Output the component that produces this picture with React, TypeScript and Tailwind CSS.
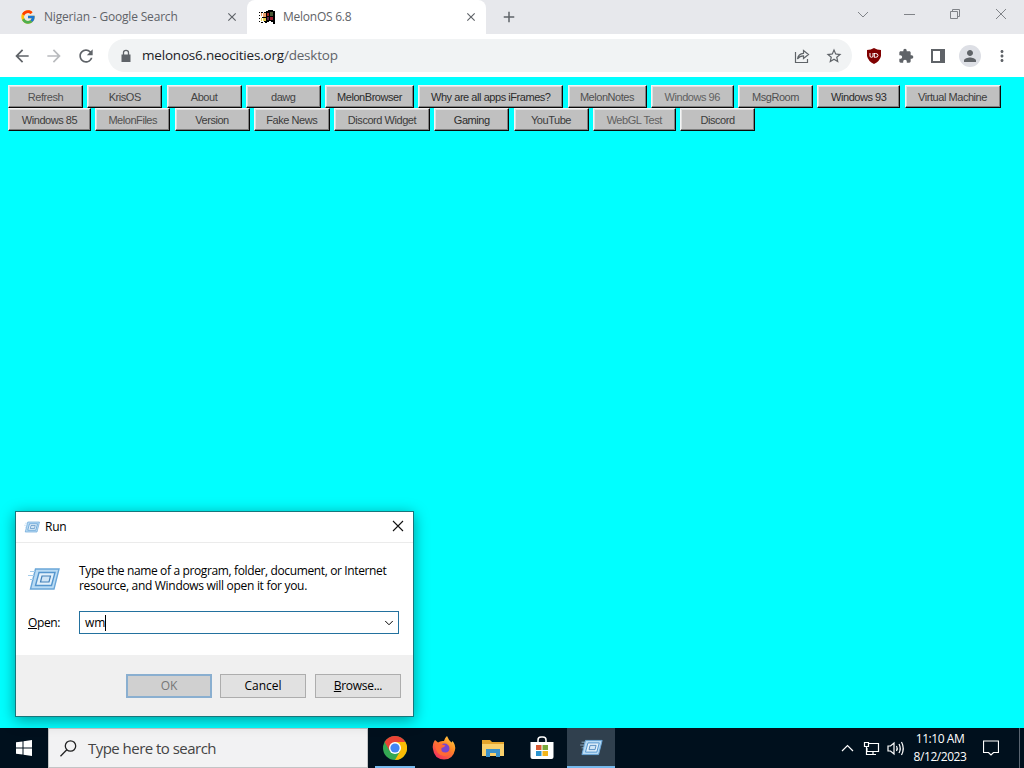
import { ChevronDown } from 'lucide-react'
import { MdArrowBack, MdArrowForward, MdRefresh, MdStarOutline, MdExtension, MdPerson, MdMoreVert, MdAdd, MdClose } from 'react-icons/md'
import { FcGoogle } from 'react-icons/fc'

const topApps = [
  { name: 'Refresh', size: 'w-[75px]', tone: 'text-[#505050]' },
  { name: 'KrisOS', size: 'w-[75px]', tone: 'text-[#444]' },
  { name: 'About', size: 'w-[75px]', tone: 'text-[#444]' },
  { name: 'dawg', size: 'w-[75px]', tone: 'text-[#444]' },
  { name: 'MelonBrowser', size: 'w-[89px]', tone: 'text-[#2c2c2c]' },
  { name: 'Why are all apps iFrames?', size: 'w-[145px]', tone: 'text-[#2c2c2c]' },
  { name: 'MelonNotes', size: 'w-[79px]', tone: 'text-[#505050]' },
  { name: 'Windows 96', size: 'w-[83px]', tone: 'text-[#606060]' },
  { name: 'MsgRoom', size: 'w-[75px]', tone: 'text-[#505050]' },
  { name: 'Windows 93', size: 'w-[83px]', tone: 'text-[#2c2c2c]' },
  { name: 'Virtual Machine', size: 'w-[96px]', tone: 'text-[#3c3c3c]' },
]

const bottomApps = [
  { name: 'Windows 85', size: 'w-[83px]', tone: 'text-[#3c3c3c]' },
  { name: 'MelonFiles', size: 'w-[75px]', tone: 'text-[#505050]' },
  { name: 'Version', size: 'w-[75px]', tone: 'text-[#3c3c3c]' },
  { name: 'Fake News', size: 'w-[76px]', tone: 'text-[#3c3c3c]' },
  { name: 'Discord Widget', size: 'w-[96px]', tone: 'text-[#3c3c3c]' },
  { name: 'Gaming', size: 'w-[75px]', tone: 'text-[#2c2c2c]' },
  { name: 'YouTube', size: 'w-[75px]', tone: 'text-[#3c3c3c]' },
  { name: 'WebGL Test', size: 'w-[83px]', tone: 'text-[#606060]' },
  { name: 'Discord', size: 'w-[75px]', tone: 'text-[#3c3c3c]' },
]

function AppRow({ apps }: { apps: typeof topApps }) {
  return (
    <div className="flex gap-[4.25px]">
      {apps.map((app) => (
        <button
          key={app.name}
          className={`h-[23px] shrink-0 whitespace-nowrap border border-t-[#f4f4f4] border-l-[#f4f4f4] border-r-[#0a0a0a] border-b-[#0a0a0a] bg-[#c0c0c0] pt-px font-['Liberation_Sans',sans-serif] text-[11px] leading-5 tracking-[-0.45px] shadow-[inset_-1px_-1px_#808080,inset_1px_1px_#dfdfdf] ${app.size} ${app.tone}`}
        >
          {app.name}
        </button>
      ))}
    </div>
  )
}

function RunIcon({ className }: { className: string }) {
  return (
    <svg viewBox="0 0 32 24" className={className} fill="none">
      <path d="M7.500 2H31L26 22H2.500Z" fill="#b9dbf4" stroke="#6aa6d8" strokeWidth="1.400" />
      <path d="M11 5.500H27L23.500 18.500H7.500Z" fill="#e3f1fb" stroke="#5596ce" strokeWidth="1.400" />
      <path d="M14 9H22.500L21 15H12.500Z" fill="#cfe5f6" stroke="#4380b8" strokeWidth="1.200" />
      <path d="M2 4.500H7M0 8.500H6M2 12.500H5" stroke="#a4cdeb" />
    </svg>
  )
}

function WindowsFlag() {
  return (
    <svg viewBox="0 0 16 16" className="size-4" shapeRendering="crispEdges">
      <path d="M7 2H9V1H14V2H16V15H14V13H12V12H10V13H8V14H6V13H7Z" fill="#000" />
      <path d="M0 3H1V4H0ZM2 3H4V4H2ZM5 3H7V4H5ZM0 6H1V7H0ZM0 9H1V10H0ZM0 12H1V13H0ZM2 13H4V14H2ZM5 12H7V13H5ZM3 8H7V9H3Z" fill="#000" />
      <path d="M2 4H3V7H2ZM4 4H7V8H4Z" fill="#e8a06a" />
      <path d="M2 9H3V12H2ZM4 9H7V12H4Z" fill="#e9cf52" />
      <path d="M8 4H10V7H8Z" fill="#a02424" />
      <path d="M11 3H14V7H11Z" fill="#4b5a35" />
      <path d="M8 8H10V11H8Z" fill="#5a2348" />
      <path d="M11 8H14V11H11Z" fill="#a01f2c" />
    </svg>
  )
}

function TabStrip() {
  return (
    <div className="flex h-[34px] bg-[#e7e8ec] text-xs text-[#5f6368]">
      <div className="flex w-[247px] items-center pl-5 pr-2">
        <FcGoogle className="size-4" />
        <span className="ml-2 flex-1 whitespace-nowrap tracking-[-0.18px]">Nigerian - Google Search</span>
        <MdClose className="size-3.5" />
      </div>
      <div className="flex w-[239px] items-center rounded-t-lg bg-white pl-3 pr-2">
        <WindowsFlag />
        <span className="ml-2 flex-1 tracking-[-0.25px]">MelonOS 6.8</span>
        <MdClose className="size-3.5" />
      </div>
      <MdAdd className="ml-3.5 mt-2 size-[18px]" />
      <div className="ml-auto flex items-start pr-[17px] pt-2 text-[#808388]">
        <svg viewBox="0 0 150 14" className="h-3.5 w-[150px]" fill="none" stroke="currentColor">
          <path d="M1 4L6 9L11 4M47 6.500H58M93.500 3.500H100.500V10.500H93.500ZM95.500 3.500V1.500H102.500V8.500H100.500M139 1L149 11M149 1L139 11" />
        </svg>
      </div>
    </div>
  )
}

function Toolbar() {
  return (
    <div className="flex h-[43px] items-center bg-white pl-3 text-[#5f6368]">
      <MdArrowBack className="size-5" />
      <MdArrowForward className="ml-3 size-5 text-[#b9bbbe]" />
      <MdRefresh className="ml-3 size-5" />
      <div className="ml-3 flex h-[33px] w-[744px] items-center rounded-full bg-[#f1f3f4] pl-[11px] pr-[9px]">
        <svg viewBox="0 0 14 14" className="size-3.5" fill="none">
          <path d="M2.500 5.500H11.500V13H2.500Z" fill="currentColor" />
          <path d="M4.500 6V3.500Q4.500 1.300 7 1.300Q9.500 1.300 9.500 3.500V6" stroke="currentColor" strokeWidth="1.300" />
        </svg>
        <div className="ml-[9px] flex-1 whitespace-nowrap text-[13.5px] tracking-[-0.2px]">
          <span className="text-[#202124]">melonos6.neocities.org</span>/desktop
        </div>
        <svg viewBox="0 0 16 16" className="size-4" fill="none" stroke="currentColor" strokeWidth="1.200">
          <path d="M1.500 4V14.500H13.500V11M3.500 11C4 7.500 6 5.500 9.500 5.300V2.500L14.500 6.500L9.500 10.500V7.800C7 7.800 5 8.800 3.500 11Z" />
        </svg>
        <MdStarOutline className="ml-[15px] size-[18px]" />
      </div>
      <svg viewBox="0 0 16 16" className="ml-3.5 size-4">
        <path d="M8 0Q11 2 15 2V8Q14 13 8 16Q2 13 1 8V2Q5 2 8 0Z" fill="#800000" />
        <path d="M4 5V8Q4 9.300 5.500 9.300Q7 9.300 7 8V5M7.700 5.500H9.500Q12 5.500 12 7.400Q12 9.300 9.500 9.300H8.300V5.500" fill="none" stroke="#fff" />
      </svg>
      <MdExtension className="ml-4 size-4" />
      <svg viewBox="0 0 16 16" className="ml-4 size-4">
        <path d="M1 1H15V15H1ZM3 3V13H10V3Z" fill="currentColor" fillRule="evenodd" />
      </svg>
      <div className="ml-[13px] flex size-[22px] items-center justify-center rounded-full bg-[#dddfe5]">
        <MdPerson className="size-[18px]" />
      </div>
      <MdMoreVert className="ml-3 size-[18px]" />
    </div>
  )
}

function RunDialog() {
  return (
    <div className="absolute left-[15px] top-[511px] flex h-[206px] w-[399px] flex-col border border-[#17777c] bg-white text-xs text-black shadow-[0_3px_14px_rgba(0,0,0,0.4)]">
      <div className="flex h-[31px] items-center border-b border-[#ebebeb] pl-2 pr-[9px]">
        <RunIcon className="h-3 w-4" />
        <span className="ml-[5px] flex-1 tracking-[-0.2px]">Run</span>
        <svg viewBox="0 0 12 12" className="mb-0.5 size-3" fill="none" stroke="#111" strokeWidth="1.100">
          <path d="M1 1L11 11M11 1L1 11" />
        </svg>
      </div>
      <div className="flex h-28 flex-col">
        <div className="mt-5 flex">
          <RunIcon className="ml-3 mt-1 h-6 w-8" />
          <p className="ml-[19px] whitespace-nowrap leading-[15px]">
            <span className="tracking-[-0.37px]">Type the name of a program, folder, document, or Internet</span>
            <br />
            <span className="tracking-[-0.3px]">resource, and Windows will open it for you.</span>
          </p>
        </div>
        <div className="mt-[18px] flex items-center">
          <label className="w-[51px] shrink-0 translate-x-3 tracking-[-0.4px]"><u>O</u>pen:</label>
          <div className="ml-3 flex h-[23px] w-80 items-center border border-[#23719e] pl-[5px] pr-0.5">
            <span>wm</span>
            <span className="h-4 w-px bg-black" />
            <ChevronDown className="ml-auto size-3.5" strokeWidth={1.7} />
          </div>
        </div>
      </div>
      <div className="flex flex-1 items-center justify-end bg-[#f0f0f0] pr-3 pt-px">
        <button className="mr-2 h-6 w-[86px] border-2 border-[#8aafd0] bg-[#d0d0d0] leading-5 text-[#777]">OK</button>
        <button className="mr-[9px] h-6 w-[86px] border border-[#adadad] bg-[#e1e1e1]">Cancel</button>
        <button className="h-6 w-[86px] border border-[#adadad] bg-[#e1e1e1] tracking-[-0.3px]"><u>B</u>rowse...</button>
      </div>
    </div>
  )
}

function ChromeIcon() {
  return (
    <svg viewBox="0 0 24 24" className="size-6">
      <circle cx="12" cy="12" r="12" fill="#34a853" />
      <path d="M1.600 6A12 12 0 0 1 22.400 6H12L6.800 15Z" fill="#ea4335" />
      <path d="M22.400 6A12 12 0 0 1 12 24L17.200 15L12 6Z" fill="#fbbc05" />
      <circle cx="12" cy="12" r="6" fill="#fff" />
      <circle cx="12" cy="12" r="4.600" fill="#4285f4" />
    </svg>
  )
}

function FirefoxIcon() {
  return (
    <svg viewBox="0 0 24 24" className="size-6">
      <defs>
        <linearGradient id="fox" x1="1" y1="0" x2="0.300" y2="1">
          <stop offset="0" stopColor="#ffe14a" />
          <stop offset="0.450" stopColor="#ff8a24" />
          <stop offset="1" stopColor="#f3305d" />
        </linearGradient>
      </defs>
      <path d="M3 4L6 6.500Q8.500 4.500 12 5Q12.500 2 15 0Q16.500 4 19.500 6.500L20.500 5Q24 9 23 14Q21 23.500 12 23.500Q2 23 1 13Q0 8 3 4Z" fill="url(#fox)" />
      <circle cx="12.500" cy="12.500" r="5" fill="#7a45cf" />
      <path d="M3 9Q7 6.500 10.500 8.500L13.500 9.500Q12.500 11.300 9.500 12Q8.500 16.500 13.500 16.500Q17 16.500 18 13Q19.500 20 12 20Q4 19 3 9Z" fill="#ff6a35" />
    </svg>
  )
}

function FolderIcon() {
  return (
    <svg viewBox="0 0 22 19" className="h-[19px] w-[22px]">
      <path d="M0 1H8L10 3H22V17H0Z" fill="#e5a52d" />
      <path d="M0 5H22V17H0Z" fill="#f9d06c" />
      <path d="M4 10H18V18H14V14H8V18H4Z" fill="#3b91ca" />
    </svg>
  )
}

function StoreIcon() {
  return (
    <svg viewBox="0 0 24 24" className="size-6">
      <path d="M8 7V4Q8 1 11 1H13Q16 1 16 4V7" fill="none" stroke="#fff" strokeWidth="1.500" />
      <path d="M0.500 6H23.500V21Q23.500 23 21.500 23H2.500Q0.500 23 0.500 21Z" fill="#fff" />
      <path d="M6 9H11.500V14H6Z" fill="#d95a33" />
      <path d="M12.500 9H18V14H12.500Z" fill="#79a83c" />
      <path d="M6 15H11.500V20H6Z" fill="#2b94cf" />
      <path d="M12.500 15H18V20H12.500Z" fill="#f3b51b" />
    </svg>
  )
}

function Taskbar() {
  return (
    <div className="flex h-10 bg-[#00101d] text-white">
      <div className="flex w-12 items-center justify-center">
        <svg viewBox="0 0 16 16" className="size-4" fill="#fff">
          <path d="M0 2.300L6.500 1.400V7.500H0ZM7.500 1.200L16 0V7.500H7.500ZM0 8.500H6.500V14.600L0 13.700ZM7.500 8.500H16V16L7.500 14.800Z" />
        </svg>
      </div>
      <div className="flex w-80 items-center border border-[#c3c4c5] bg-[#f2f2f3] pl-[11px] text-[#444]">
        <svg viewBox="0 0 17 17" className="size-[17px]" fill="none" stroke="#222" strokeWidth="1.300">
          <circle cx="10.500" cy="6" r="5.200" />
          <path d="M6.800 9.800L0.500 16.200" />
        </svg>
        <span className="ml-[11px] text-[15px] tracking-[-0.53px]">Type here to search</span>
      </div>
      <div className="ml-[3px] flex gap-px">
        <div className="flex w-12 items-center justify-center">
          <div className="flex h-10 w-10 items-center justify-center border-b-2 border-[#76b9ed] pt-0.5">
            <ChromeIcon />
          </div>
        </div>
        <div className="flex w-12 items-center justify-center"><FirefoxIcon /></div>
        <div className="flex w-12 items-center justify-center"><FolderIcon /></div>
        <div className="flex w-12 items-center justify-center"><StoreIcon /></div>
        <div className="flex w-12 items-center justify-center border-b-2 border-[#76b9ed] bg-[#30404e]">
          <RunIcon className="h-[17px] w-[23px]" />
        </div>
      </div>
      <div className="ml-auto flex items-center">
        <svg viewBox="0 0 66 18" className="h-[18px] w-[66px]" fill="none" stroke="#fff" strokeWidth="1.200">
          <path d="M2 12L7.500 6.500L13 12" />
          <path d="M29 4.500H38.500V12.500H27V9M24.500 3.500H28.500V7.500H24.500ZM26.500 7.500V15.500H31M33 12.500V15.500M30 15.500H36" />
          <path d="M48 7H50.500L54 4V15L50.500 12H48ZM56.500 7Q58 9.500 56.500 12M59 5Q61.500 9.500 59 14M61.500 3Q65 9.500 61.500 16" />
        </svg>
        <div className="ml-[5px] w-[58px] whitespace-nowrap text-center text-xs leading-[18px] tracking-[-0.45px]">
          11:10 AM<br />8/12/2023
        </div>
        <svg viewBox="0 0 16 16" className="ml-3.5 size-4" fill="none" stroke="#fff" strokeWidth="1.200">
          <path d="M0.500 1H15.500V12.500H10.500L8 15L5.500 12.500H0.500Z" />
        </svg>
        <div className="ml-5 h-10 w-[5px] border-l border-[#5a6571]" />
      </div>
    </div>
  )
}

export default function App() {
  return (
    <div className="relative flex h-[768px] w-[1024px] flex-col overflow-hidden bg-[#00ffff] font-['Open_Sans','Noto_Sans',sans-serif]">
      <TabStrip />
      <Toolbar />
      <div className="flex-1 px-2 pt-2">
        <AppRow apps={topApps} />
        <AppRow apps={bottomApps} />
      </div>
      <RunDialog />
      <Taskbar />
    </div>
  )
}
